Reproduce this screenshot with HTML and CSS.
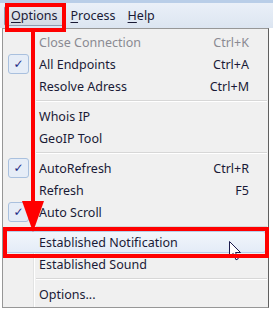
FILE: index.html
```html
<!DOCTYPE html>
<html lang="en">
<head>
    <meta charset="UTF-8">
    <meta name="viewport" content="width=device-width, initial-scale=1.0">
    <title>Options Menu</title>
    <link rel="stylesheet" href="styles.css">
</head>
<body>
    <!-- Window title edge and menu bar -->
    <div class="title-edge"></div>
    <nav class="menubar">
        <span class="menubar-item pressed"><u>O</u>ptions</span>
        <span class="menubar-item"><u>P</u>rocess</span>
        <span class="menubar-item"><u>H</u>elp</span>
    </nav>

    <!-- Options drop-down -->
    <ul class="dropdown">
        <li class="item disabled"><span class="check"></span><span class="label">Close Connection</span><span class="key">Ctrl+K</span></li>
        <li class="item"><span class="check on">✓</span><span class="label">All Endpoints</span><span class="key">Ctrl+A</span></li>
        <li class="item"><span class="check"></span><span class="label">Resolve Adress</span><span class="key">Ctrl+M</span></li>
        <li class="sep"></li>
        <li class="item"><span class="check"></span><span class="label">Whois IP</span><span class="key"></span></li>
        <li class="item"><span class="check"></span><span class="label">GeoIP Tool</span><span class="key"></span></li>
        <li class="sep"></li>
        <li class="item"><span class="check on">✓</span><span class="label">AutoRefresh</span><span class="key">Ctrl+R</span></li>
        <li class="item"><span class="check"></span><span class="label">Refresh</span><span class="key">F5</span></li>
        <li class="item"><span class="check on">✓</span><span class="label">Auto Scroll</span><span class="key"></span></li>
        <li class="sep"></li>
        <li class="item hot"><span class="check"></span><span class="label">Established Notification</span><span class="key"></span></li>
        <li class="item"><span class="check"></span><span class="label">Established Sound</span><span class="key"></span></li>
        <li class="sep"></li>
        <li class="item"><span class="check"></span><span class="label">Options...</span><span class="key"></span></li>
    </ul>

    <!-- Annotation overlay: mouse pointer, arrow and red marks -->
    <svg class="pointer" width="13" height="20" viewBox="0 0 13 20">
        <path d="M0.5,0.5 L0.5,16 L4.2,12.4 L7,18.8 L9.2,17.8 L6.5,11.5 L11.5,11.5 Z" fill="#ffffff" stroke="#1c1c4e" stroke-width="1"/>
    </svg>
    <svg class="arrow" width="60" height="240" viewBox="0 0 60 240">
        <rect x="31" y="30" width="4" height="176" fill="#ff0000"/>
        <polygon points="22,201 44,201 33,232" fill="#ff0000"/>
    </svg>
    <div class="mark mark-options"></div>
    <div class="mark mark-item"></div>
</body>
</html>
```

FILE: styles.css
```css
/* Base */
body {
    margin: 0;
    width: 273px;
    height: 312px;
    overflow: hidden;
    background: #ffffff;
    font-family: "Noto Sans", "Open Sans", sans-serif;
    font-size: 12.5px;
    color: #1a1a36;
    position: relative;
}

/* Top of the window */
.title-edge {
    height: 3px;
    background: #b9cee8;
}
.menubar {
    display: flex;
    height: 25px;
    padding-left: 4px;
    align-items: center;
    background: linear-gradient(#eaf0f8, #dce5f1);
}
.menubar-item {
    padding: 0 6px;
    height: 20px;
    line-height: 20px;
    box-sizing: border-box;
}
.menubar-item u {
    text-decoration-thickness: 1px;
    text-underline-offset: 2px;
}
.menubar-item.pressed {
    background: linear-gradient(#e4e8ee, #d3dae4);
    border: 1px solid #8f9cb0;
    border-radius: 2px;
    line-height: 18px;
    padding: 0 6px;
}

/* Drop-down menu */
.dropdown {
    list-style: none;
    margin: 0 0 0 2px;
    padding: 2px 0;
    width: 267px;
    box-sizing: border-box;
    border: 1px solid #979797;
    border-right-color: #5f5f5f;
    background:
        linear-gradient(to right, transparent 30px, #e2e3e3 30px, #e2e3e3 31px, #ffffff 31px, #ffffff 32px, transparent 32px),
        #f0f0f0;
}
.item {
    display: grid;
    grid-template-columns: 36px 1fr auto;
    align-items: center;
    height: 22px;
    padding-right: 19px;
}
.item.disabled {
    color: #8a8a92;
}
.item.hot {
    margin: 0 2px;
    padding-right: 17px;
    grid-template-columns: 34px 1fr auto;
    border-radius: 3px;
    background: linear-gradient(#f2f6fb, #e3ebf7);
    box-shadow: inset 0 0 0 1px #b6cdea;
}
.check {
    width: 21px;
    height: 20px;
    margin-left: 5px;
    box-sizing: border-box;
    text-align: center;
    line-height: 18px;
    font-family: "DejaVu Sans", sans-serif;
    font-size: 12px;
    font-weight: bold;
    color: #1d2b86;
}
.check.on {
    background: #e6edf7;
    border: 1px solid #a9c0de;
    border-radius: 3px;
}
.key {
    text-align: right;
}
.sep {
    height: 8px;
    margin-left: 33px;
    margin-right: 1px;
    background: linear-gradient(transparent 3px, #d7d7d7 3px, #d7d7d7 4px, #ffffff 4px, #ffffff 5px, transparent 5px);
}

/* Annotation overlay */
.pointer {
    position: absolute;
    left: 229px;
    top: 241px;
}
.arrow {
    position: absolute;
    left: 0;
    top: 0;
}
.mark {
    position: absolute;
    border: 4px solid #ff0000;
    box-sizing: border-box;
}
.mark-options {
    left: 5px;
    top: 3px;
    width: 61px;
    height: 29px;
}
.mark-item {
    left: 3px;
    top: 227px;
    width: 266px;
    height: 31px;
}
```
